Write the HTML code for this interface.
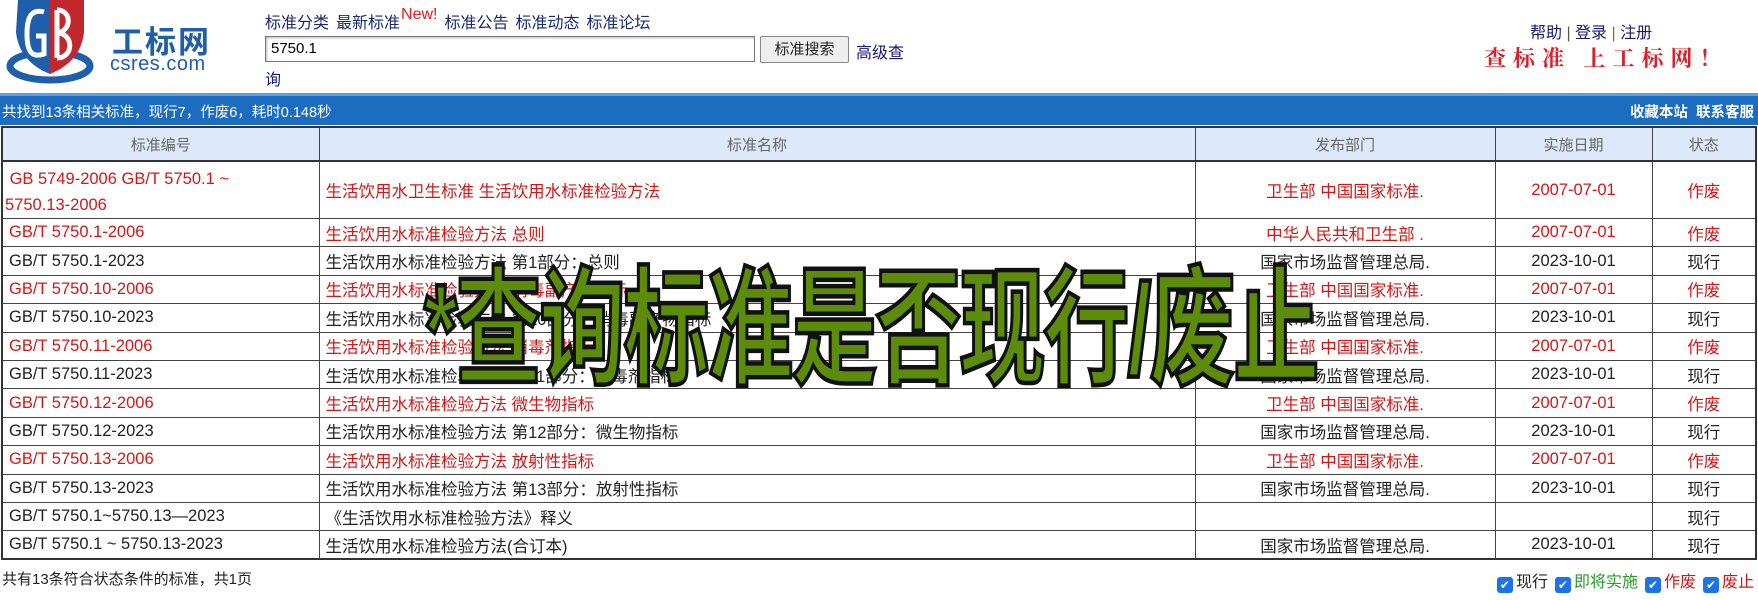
<!DOCTYPE html>
<html><head><meta charset="utf-8">
<style>
*{margin:0;padding:0;box-sizing:border-box}
body{width:1758px;height:600px;background:#fff;font-family:"Liberation Sans","Noto Sans CJK SC",sans-serif;position:relative;overflow:hidden;color:#222}
.abs{position:absolute;white-space:nowrap}
.nav{left:265px;top:9px;font-size:16px;color:#1a2a6e}
.nav span{margin-right:7px}
.new{color:#e0201a;font-size:16px;position:relative;top:-9px;margin-left:-6px;margin-right:4px}
#inp{left:265px;top:36px;width:490px;height:26px;border:1px solid #777;box-shadow:inset 1px 1px 2px #bbb;font-size:15px;padding:3px 5px;color:#000}
#btn{left:760px;top:36px;width:89px;height:27px;border:1px solid #888;background:#eee;border-radius:2px;font-size:15px;text-align:center;line-height:25px;color:#222}
.bar{left:0;top:93px;width:1758px;height:32px;background:#1c6cbf;border-top:3px solid #5aa0e6;color:#fff;font-size:14.5px}
table{position:absolute;left:1px;top:126px;width:1756px;border-collapse:collapse;table-layout:fixed;font-size:16.5px;border:2px solid #333}
td,th{border:1px solid #444;padding:0 6px;overflow:hidden;white-space:nowrap}
th{background:#dde9fb;font-weight:normal;color:#666;font-size:15px;height:34px;border-bottom:2px solid #333}
tr{height:28.4px}
td.c{text-align:center}
.r td{color:#d01818}
.over{left:424px;top:224px;font-size:86px;font-weight:bold;color:#5c8c0a;-webkit-text-stroke:3px #111;transform:scaleY(1.5);transform-origin:top left;letter-spacing:-2px;font-family:"Liberation Sans","Noto Sans CJK SC",sans-serif}
.foot{left:2px;top:568px;font-size:15px}
.cb{display:inline-block;width:16px;height:16px;background:#1a73e8;border-radius:3px;color:#fff;font-size:12px;line-height:16px;text-align:center;vertical-align:-2px;margin:0 3px 0 7px}
</style></head><body>
<svg class="abs" style="left:4px;top:0" width="92" height="86" viewBox="0 0 92 86">
<ellipse cx="46" cy="66" rx="40" ry="14" fill="none" stroke="#1f5ea8" stroke-width="7"/>
<path d="M14 0 L46 0 L46 74 C26 66 14 52 12 32 Z" fill="#1f5ea8"/>
<path d="M46 0 L80 0 L80 32 C78 52 66 66 46 74 Z" fill="#c0282e"/>
<path d="M40 12 C26 8 23 20 23 34 C23 52 28 58 40 54 L40 36 L32 36" fill="none" stroke="#fff" stroke-width="5"/>
<path d="M53 10 L53 58 M53 10 C68 10 68 31 53 33 C70 33 70 58 53 58" fill="none" stroke="#fff" stroke-width="5"/>
</svg>
<div class="abs" style="left:112px;top:17px;font-size:31px;font-weight:bold;color:#1f5ea8;font-family:'Noto Sans CJK SC',sans-serif;letter-spacing:2px">工标网</div>
<div class="abs" style="left:110px;top:53px;font-size:20px;color:#1f5ea8;letter-spacing:0.5px">csres.com</div>
<div class="abs nav"><span>标准分类</span><span>最新标准</span><span class="new">New!</span><span>标准公告</span><span>标准动态</span><span>标准论坛</span></div>
<div class="abs" id="inp">5750.1</div>
<div class="abs" id="btn">标准搜索</div>
<div class="abs" style="left:856px;top:39px;font-size:16px;color:#1a1a6e">高级查</div>
<div class="abs" style="left:265px;top:66px;font-size:16px;color:#1a1a6e">询</div>
<div class="abs" style="left:1530px;top:19px;font-size:16px;color:#1a1a6e">帮助 <span style="color:#555">|</span> 登录 <span style="color:#a06020">|</span> 注册</div>
<div class="abs" style="left:1484px;top:42px;font-size:22px;font-weight:bold;color:#d8202a;font-family:'Noto Serif CJK SC',serif;letter-spacing:7px">查标准 上工标网！</div>
<div class="abs bar"><span style="position:absolute;left:2px;top:5px">共找到13条相关标准，现行7，作废6，耗时0.148秒</span><span style="position:absolute;right:4px;top:5px;font-weight:bold">收藏本站&nbsp;&nbsp;联系客服</span></div>
<table>
<colgroup><col style="width:317px"><col style="width:876px"><col style="width:300px"><col style="width:157px"><col></colgroup>
<tr><th>标准编号</th><th>标准名称</th><th>发布部门</th><th>实施日期</th><th>状态</th></tr>
<tr class="r" style="height:56px"><td style="line-height:26px;padding-left:2px;padding-top:4px">&nbsp;GB 5749-2006 GB/T 5750.1 ~<br>5750.13-2006</td><td>生活饮用水卫生标准 生活饮用水标准检验方法</td><td class="c">卫生部 中国国家标准.</td><td class="c">2007-07-01</td><td class="c">作废</td></tr>
<tr class="r"><td>GB/T 5750.1-2006</td><td>生活饮用水标准检验方法 总则</td><td class="c">中华人民共和卫生部 .</td><td class="c">2007-07-01</td><td class="c">作废</td></tr>
<tr><td>GB/T 5750.1-2023</td><td>生活饮用水标准检验方法 第1部分：总则</td><td class="c">国家市场监督管理总局.</td><td class="c">2023-10-01</td><td class="c">现行</td></tr>
<tr class="r"><td>GB/T 5750.10-2006</td><td>生活饮用水标准检验方法 消毒副产物指标</td><td class="c">卫生部 中国国家标准.</td><td class="c">2007-07-01</td><td class="c">作废</td></tr>
<tr><td>GB/T 5750.10-2023</td><td>生活饮用水标准检验方法 第10部分：消毒副产物指标</td><td class="c">国家市场监督管理总局.</td><td class="c">2023-10-01</td><td class="c">现行</td></tr>
<tr class="r"><td>GB/T 5750.11-2006</td><td>生活饮用水标准检验方法 消毒剂指标</td><td class="c">卫生部 中国国家标准.</td><td class="c">2007-07-01</td><td class="c">作废</td></tr>
<tr><td>GB/T 5750.11-2023</td><td>生活饮用水标准检验方法 第11部分：消毒剂指标</td><td class="c">国家市场监督管理总局.</td><td class="c">2023-10-01</td><td class="c">现行</td></tr>
<tr class="r"><td>GB/T 5750.12-2006</td><td>生活饮用水标准检验方法 微生物指标</td><td class="c">卫生部 中国国家标准.</td><td class="c">2007-07-01</td><td class="c">作废</td></tr>
<tr><td>GB/T 5750.12-2023</td><td>生活饮用水标准检验方法 第12部分：微生物指标</td><td class="c">国家市场监督管理总局.</td><td class="c">2023-10-01</td><td class="c">现行</td></tr>
<tr class="r"><td>GB/T 5750.13-2006</td><td>生活饮用水标准检验方法 放射性指标</td><td class="c">卫生部 中国国家标准.</td><td class="c">2007-07-01</td><td class="c">作废</td></tr>
<tr><td>GB/T 5750.13-2023</td><td>生活饮用水标准检验方法 第13部分：放射性指标</td><td class="c">国家市场监督管理总局.</td><td class="c">2023-10-01</td><td class="c">现行</td></tr>
<tr><td>GB/T 5750.1~5750.13—2023</td><td>《生活饮用水标准检验方法》释义</td><td class="c"></td><td class="c"></td><td class="c">现行</td></tr>
<tr><td>GB/T 5750.1 ~ 5750.13-2023</td><td>生活饮用水标准检验方法(合订本)</td><td class="c">国家市场监督管理总局.</td><td class="c">2023-10-01</td><td class="c">现行</td></tr>
</table>
<div class="abs over">*查询标准是否现行/废止</div>
<div class="abs foot">共有13条符合状态条件的标准，共1页</div>
<div class="abs" style="right:4px;top:568px;font-size:16px"><span class="cb">✔</span>现行<span class="cb">✔</span><span style="color:#2a9a2a">即将实施</span><span class="cb">✔</span><span style="color:#d01818">作废</span><span class="cb">✔</span><span style="color:#d01818">废止</span></div>
</body></html>
